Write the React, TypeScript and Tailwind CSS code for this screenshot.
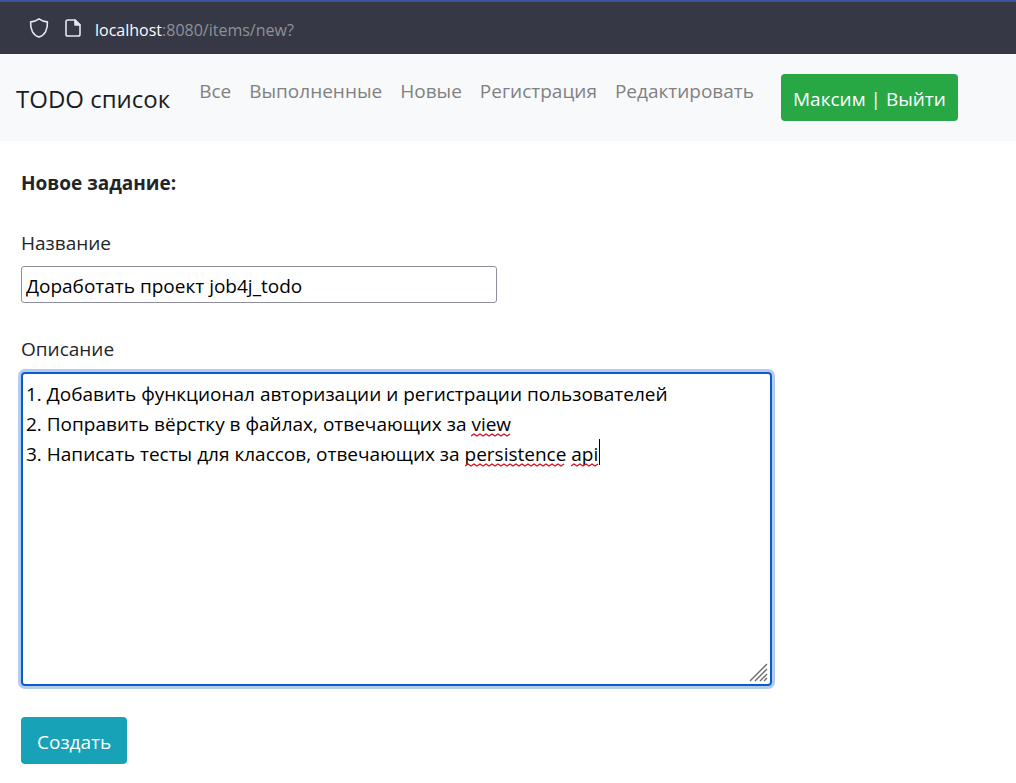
import { useState } from 'react';

const links = ['Все', 'Выполненные', 'Новые', 'Регистрация', 'Редактировать'];

const initialDescription = [
  '1. Добавить функционал авторизации и регистрации пользователей',
  '2. Поправить вёрстку в файлах, отвечающих за view',
  '3. Написать тесты для классов, отвечающих за persistence api',
].join('\n');

function ShieldIcon() {
  return (
    <svg width="20" height="22" viewBox="0 0 20 22" fill="none" stroke="#e4e7f2" strokeWidth="1.6" strokeLinejoin="round" aria-hidden="true">
      <path d="M10 1.8 C7.6 3.6 4.6 4.6 1.6 4.9 C1.4 7.9 1.9 11.8 3.5 14.8 C5 17.3 7.3 19.3 10 20.1 C12.7 19.3 15 17.3 16.5 14.8 C18.1 11.8 18.6 7.9 18.4 4.9 C15.4 4.6 12.4 3.6 10 1.8 Z" />
    </svg>
  );
}

function PageIcon() {
  return (
    <svg width="16" height="18" viewBox="0 0 16 18" fill="none" stroke="#e4e7f2" strokeWidth="1.6" strokeLinejoin="round" aria-hidden="true">
      <path d="M2.8 1 H10 L15 6 V15.2 Q15 17 13.2 17 H2.8 Q1 17 1 15.2 V2.8 Q1 1 2.8 1 Z" />
      <path d="M10 1 V6 H15 Z" fill="#e4e7f2" />
    </svg>
  );
}

function Squiggle({ width, className }: { width: number; className: string }) {
  const steps = Math.floor(width / 3);
  const d = 'M0 3' + Array.from({ length: steps }, (_, i) => ` l3 ${i % 2 ? 2 : -2}`).join('');
  return (
    <svg width={width} height="4" viewBox={`0 0 ${width} 4`} fill="none" stroke="#d3141f" strokeWidth="1.4" className={`pointer-events-none absolute ${className}`} aria-hidden="true">
      <path d={d} />
    </svg>
  );
}

export default function App() {
  const [name, setName] = useState('Доработать проект job4j_todo');
  const [description, setDescription] = useState(initialDescription);

  return (
    <div className="min-h-screen bg-white font-['Open_Sans','Noto_Sans',sans-serif] text-[19px] leading-[30px] text-[#212529]">
      <header className="flex h-[54px] items-center gap-[14px] border-t-2 border-[#3c53a0] bg-[#363945] px-[29px] pt-1">
        <div className="flex items-center gap-4 pb-1">
          <ShieldIcon />
          <PageIcon />
        </div>
        <p className="text-base text-[#8f9199]">
          <span className="text-[#fbfbfe]">localhost</span>:8080/items/new?
        </p>
      </header>

      <nav className="flex items-start bg-[#f8f9fa] px-4 py-5">
        <a href="#" className="mr-5 pt-[10px] text-2xl leading-[30px] text-[#1b1d1f]">TODO список</a>
        <ul className="flex pt-[2px]">
          {links.map((label) => (
            <li key={label}>
              <a href="#" className="block px-[9px] text-[#808182]">{label}</a>
            </li>
          ))}
        </ul>
        <button type="button" className="ml-[18px] h-[47px] rounded bg-[#28a745] px-3 pt-[2px] text-white">Максим | Выйти</button>
      </nav>

      <main className="px-[21px] pt-[27px] pb-5">
        <form onSubmit={(e) => e.preventDefault()}>
          <h1 className="font-bold">Новое задание:</h1>
          <div className="mt-[30px]">
            <label htmlFor="name" className="block">Название</label>
            <input
              id="name"
              value={name}
              onChange={(e) => setName(e.target.value)}
              className="mt-2 block h-[37px] w-[476px] max-w-full rounded-[3px] border border-[#8f8f9d] bg-white px-1 pt-[2px] text-black outline-none"
            />
          </div>
          <div className="mt-[31px]">
            <label htmlFor="description" className="block">Описание</label>
            <div className="relative mt-2 w-[751px] max-w-full rounded-sm ring-3 ring-[#b3cbef]">
              <textarea
                id="description"
                value={description}
                onChange={(e) => setDescription(e.target.value)}
                className="block h-[314px] w-full resize-none rounded-sm border-2 border-[#0a5dc8] bg-white px-[3px] py-[5px] text-black outline-none"
              />
              <Squiggle width={41} className="top-[61px] left-[450px]" />
              <Squiggle width={101} className="top-[91px] left-[444px]" />
              <Squiggle width={28} className="top-[91px] left-[550px]" />
              <span className="pointer-events-none absolute top-[67px] left-[578px] h-[26px] w-px bg-black" />
              <svg width="20" height="20" viewBox="0 0 20 20" stroke="#6b6b6b" strokeWidth="1.4" className="pointer-events-none absolute right-[3px] bottom-[3px]" aria-hidden="true">
                <path d="M1 18 L18 1 M6 18 L18 6 M11 18 L18 11 M15 18 L18 15" />
              </svg>
            </div>
          </div>
          <button type="submit" className="mt-[31px] h-[47px] rounded bg-[#17a2b8] px-4 pt-[2px] text-white">Создать</button>
        </form>
      </main>
    </div>
  );
}
